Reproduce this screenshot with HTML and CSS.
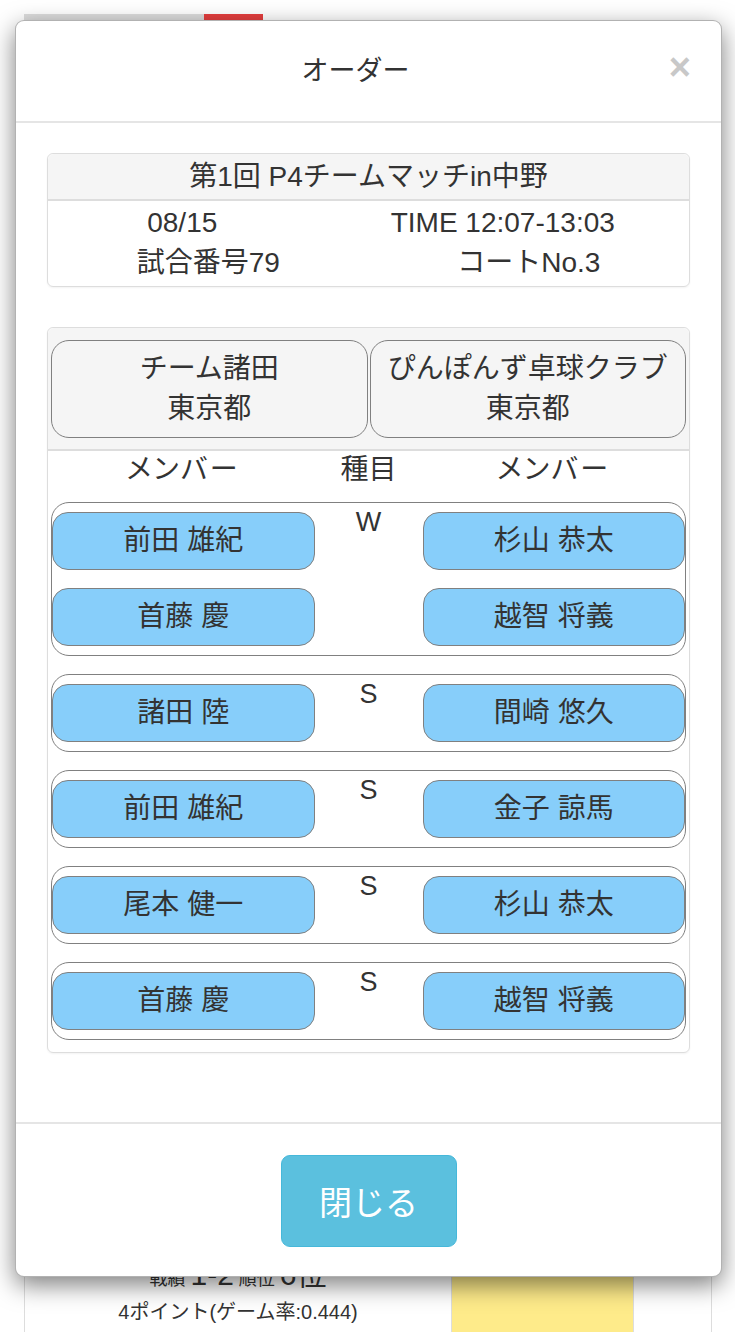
FILE: index.html
```html
<!DOCTYPE html>
<html>
<head>
  <meta charset="utf-8">
  <title>オーダー</title>
  <link rel="stylesheet" href="styles.css">
</head>
<body>
  <div class="page">
    <div class="tabs">
      <div class="tab"></div>
      <div class="tab tab-red"></div>
    </div>
    <div class="standings">
      <div class="standings-row">
        <div class="standings-cell first">
          <div class="record">戦績 <b>1-2</b> 順位 <b>6位</b></div>
          <div class="points">4ポイント(ゲーム率:0.444)</div>
        </div>
        <div class="standings-cell yellow"></div>
        <div class="standings-cell last"></div>
      </div>
    </div>
  </div>

  <div class="modal">
    <div class="modal-header">
      <h4 class="modal-title">オーダー</h4>
      <span class="close">&times;</span>
    </div>

    <div class="modal-body">
      <div class="info-panel">
        <div class="info-title">第1回 P4チームマッチin中野</div>
        <div class="info-row first">
          <div>08/15</div>
          <div>TIME 12:07-13:03</div>
        </div>
        <div class="info-row">
          <div>試合番号79</div>
          <div>コートNo.3</div>
        </div>
      </div>

      <div class="order-panel">
        <div class="teams">
          <div class="team">チーム諸田<br>東京都</div>
          <div class="team">ぴんぽんず卓球クラブ<br>東京都</div>
        </div>
        <div class="order-head">
          <div class="narrow">メンバー</div>
          <div>種目</div>
          <div class="narrow">メンバー</div>
        </div>

        <div class="match">
          <div class="side">
            <div class="player">前田 雄紀</div>
            <div class="player">首藤 慶</div>
          </div>
          <div class="kind">W</div>
          <div class="side">
            <div class="player">杉山 恭太</div>
            <div class="player">越智 将義</div>
          </div>
        </div>

        <div class="match">
          <div class="side"><div class="player">諸田 陸</div></div>
          <div class="kind">S</div>
          <div class="side"><div class="player">間崎 悠久</div></div>
        </div>

        <div class="match">
          <div class="side"><div class="player">前田 雄紀</div></div>
          <div class="kind">S</div>
          <div class="side"><div class="player">金子 諒馬</div></div>
        </div>

        <div class="match">
          <div class="side"><div class="player">尾本 健一</div></div>
          <div class="kind">S</div>
          <div class="side"><div class="player">杉山 恭太</div></div>
        </div>

        <div class="match">
          <div class="side"><div class="player">首藤 慶</div></div>
          <div class="kind">S</div>
          <div class="side"><div class="player">越智 将義</div></div>
        </div>
      </div>
    </div>

    <div class="modal-footer">
      <button class="btn-close">閉じる</button>
    </div>
  </div>
</body>
</html>
```

FILE: styles.css
```css
html, body {
  margin: 0;
  height: 100%;
}

body {
  font-family: "Liberation Sans", "Noto Sans CJK JP", sans-serif;
  color: #333;
  background-color: #fff;
  overflow: hidden;
}

/* Page behind the dialog */
.page {
  padding: 14px 23px 0 24px;
  height: 1318px;
  display: flex;
  flex-direction: column;
  justify-content: space-between;
}

.tabs {
  display: flex;
  height: 40px;
}

.tab {
  width: 180px;
  background-color: #ddd;
}

.tab-red {
  width: 59px;
  background-color: #e53e3e;
}

.standings {
  border-left: 1px solid #ddd;
  border-right: 1px solid #ddd;
}

.standings-row {
  display: flex;
  height: 66px;
}

.standings-cell {
  flex-shrink: 0;
  border-left: 1px solid #ddd;
}

.standings-cell.first {
  width: 426px;
  border-left: none;
  text-align: center;
}

.standings-cell.yellow {
  width: 181px;
  background-color: #feeb8a;
}

.standings-cell.last {
  flex: 1;
}

.record {
  font-size: 18px;
  line-height: 30px;
  margin-top: -6px;
}

.record b {
  font-size: 30px;
  font-weight: normal;
}

.points {
  font-size: 20px;
  line-height: 36px;
}

/* Dialog */
.modal {
  position: absolute;
  top: 20px;
  left: 15px;
  width: 705px;
  height: 1255px;
  background-color: #fff;
  border: 1px solid rgba(0, 0, 0, 0.3);
  border-radius: 9px;
  box-shadow: 0 8px 24px rgba(0, 0, 0, 0.5);
  display: flex;
  flex-direction: column;
}

.modal-header {
  position: relative;
  height: 102px;
  display: flex;
  align-items: center;
  justify-content: center;
  padding-right: 26px;
  padding-bottom: 6px;
  box-sizing: border-box;
  border-bottom: 2px solid #e5e5e5;
}

.modal-title {
  margin: 0;
  font-size: 27px;
  font-weight: normal;
}

.close {
  position: absolute;
  right: 30px;
  top: 27px;
  font-size: 38px;
  font-weight: bold;
  line-height: 1;
  color: #c8c8c8;
}

.modal-body {
  flex: 1;
  padding: 30px 31px 0 31px;
}

.info-panel {
  border: 1px solid #ddd;
  border-radius: 6px;
  box-shadow: 0 1px 2px rgba(0, 0, 0, 0.05);
  font-size: 28px;
}

.info-title {
  height: 45px;
  line-height: 45px;
  text-align: center;
  background-color: #f5f5f5;
  border-bottom: 2px solid #ddd;
  border-radius: 6px 6px 0 0;
}

.info-row {
  display: grid;
  grid-template-columns: 1fr 1fr;
  height: 40px;
  line-height: 40px;
  text-align: center;
}

.info-row.first {
  margin-top: 2px;
}

.info-row.first div {
  padding-right: 52px;
}

.info-row:last-child {
  margin-bottom: 3px;
}

.order-panel {
  margin-top: 40px;
  border: 1px solid #ddd;
  border-radius: 6px;
  box-shadow: 0 1px 2px rgba(0, 0, 0, 0.05);
  padding-bottom: 12px;
  font-size: 28px;
}

.teams {
  display: flex;
  gap: 2px;
  padding: 12px 3px 11px 3px;
  background-color: #f5f5f5;
  border-bottom: 2px solid #ddd;
  border-radius: 6px 6px 0 0;
}

.team {
  flex: 1;
  height: 98px;
  box-sizing: border-box;
  border: 1.5px solid #808080;
  border-radius: 18px;
  text-align: center;
  line-height: 40px;
  padding-top: 8px;
}

.order-head {
  display: grid;
  grid-template-columns: 1fr 108px 1fr;
  padding: 0 4px;
  height: 39px;
  line-height: 38px;
  text-align: center;
  margin-bottom: 12px;
}

.narrow {
  font-feature-settings: "palt";
  letter-spacing: 2.5px;
}

.match {
  display: grid;
  grid-template-columns: 1fr 108px 1fr;
  margin: 0 3px 18px 3px;
  padding: 9px 0;
  border: 1.5px solid #808080;
  border-radius: 18px;
}

.match:last-child {
  margin-bottom: 0;
}

.side {
  display: flex;
  flex-direction: column;
  gap: 18px;
}

.player {
  height: 58px;
  line-height: 55px;
  box-sizing: border-box;
  background-color: #87cefa;
  border: 1.5px solid #808080;
  border-radius: 16px;
  text-align: center;
}

.kind {
  text-align: center;
  font-size: 27px;
  line-height: 20px;
}

.modal-footer {
  border-top: 2px solid #e5e5e5;
  padding: 31px 0 29px 0;
  display: flex;
  justify-content: center;
}

.btn-close {
  width: 176px;
  height: 92px;
  font-family: "Liberation Sans", "Noto Sans CJK JP", sans-serif;
  font-size: 33px;
  color: #fff;
  background-color: #5bc0de;
  border: 1px solid #46b8da;
  border-radius: 9px;
}
```
